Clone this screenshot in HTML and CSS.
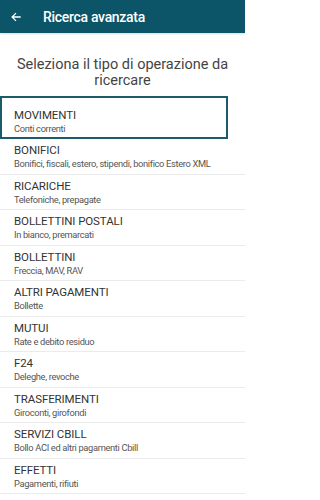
FILE: index.html
```html
<!DOCTYPE html>
<html lang="it">
<head>
<meta charset="utf-8">
<link rel="stylesheet" href="styles.css">
</head>
<body>
<div class="screen">
<header class="appbar">
  <svg class="back" width="10" height="10" viewBox="0 0 10 10"><path d="M9.7 5H1.1M5 1.1L1.1 5 5 8.9" fill="none" stroke="#fff" stroke-width="1.3"/></svg>
  <span class="appbar-title">Ricerca avanzata</span>
</header>
<h1 class="heading">Seleziona il tipo di operazione da ricercare</h1>
<ul class="list">
  <li class="item selected"><div class="t">MOVIMENTI</div><div class="s">Conti correnti</div></li>
  <li class="item"><div class="t">BONIFICI</div><div class="s">Bonifici, fiscali, estero, stipendi, bonifico Estero XML</div></li>
  <li class="item"><div class="t">RICARICHE</div><div class="s">Telefoniche, prepagate</div></li>
  <li class="item"><div class="t">BOLLETTINI POSTALI</div><div class="s">In bianco, premarcati</div></li>
  <li class="item"><div class="t">BOLLETTINI</div><div class="s">Freccia, MAV, RAV</div></li>
  <li class="item"><div class="t">ALTRI PAGAMENTI</div><div class="s">Bollette</div></li>
  <li class="item"><div class="t">MUTUI</div><div class="s">Rate e debito residuo</div></li>
  <li class="item"><div class="t">F24</div><div class="s">Deleghe, revoche</div></li>
  <li class="item"><div class="t">TRASFERIMENTI</div><div class="s">Giroconti, girofondi</div></li>
  <li class="item"><div class="t">SERVIZI CBILL</div><div class="s">Bollo ACI ed altri pagamenti Cbill</div></li>
  <li class="item"><div class="t">EFFETTI</div><div class="s">Pagamenti, rifiuti</div></li>
</ul>
</div>
</body>
</html>
```
FILE: styles.css
```css
* { box-sizing: border-box; }
html, body { margin: 0; padding: 0; background: #fff; font-family: Roboto, "Liberation Sans", sans-serif; overflow: hidden; }
.screen { width: 245px; height: 500px; overflow: hidden; }
.appbar {
  height: 33px;
  background: #0c5467;
  display: flex;
  align-items: center;
  padding-left: 11px;
  box-shadow: 0 1px 2px rgba(0,0,0,0.15);
}
.back { flex: none; }
.appbar-title {
  color: #fff;
  font-size: 14px;
  font-weight: 500;
  letter-spacing: -0.3px;
  margin-left: 22px;
}
.heading {
  margin: 0;
  padding: 24px 10px 0;
  height: 63px;
  font-weight: 400;
  font-size: 14.5px;
  line-height: 16px;
  color: #444;
  text-align: center;
}
.list { list-style: none; margin: 0; padding: 0; }
.item {
  height: 35.5px;
  padding: 4px 0 0 14px;
  border-bottom: 1.5px solid #ebebeb;
}
.item.selected {
  height: 43px;
  width: 228px;
  border: 2px solid #1d5a6b;
  padding: 10px 0 0 12px;
}
.t { font-size: 11.5px; line-height: 15px; color: #333; letter-spacing: -0.1px; }
.s { font-size: 9.3px; line-height: 12px; color: #555; white-space: nowrap; letter-spacing: -0.33px; }
```
